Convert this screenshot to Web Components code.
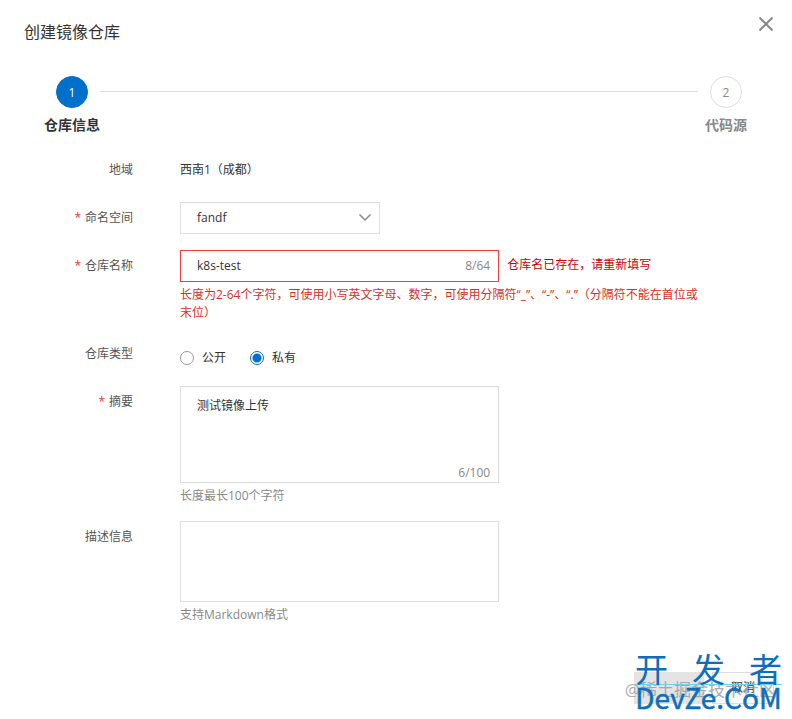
<!DOCTYPE html>
<html lang="zh-CN">
<head>
<meta charset="utf-8">
<title>创建镜像仓库</title>
<style>
  body {
    margin: 0;
    background: #fff;
    color: #333;
    font: 12px/18px "Open Sans", "Noto Sans CJK SC", sans-serif;
    text-spacing-trim: space-all;
  }
</style>
</head>
<body>
<repo-dialog heading="创建镜像仓库">
  <step-bar slot="steps">
    <step-item number="1" active>仓库信息</step-item>
    <step-item number="2">代码源</step-item>
  </step-bar>
  <static-field label="地域" value="西南1（成都）"></static-field>
  <select-field label="命名空间" value="fandf" required></select-field>
  <text-field label="仓库名称" value="k8s-test" max="64" error="仓库名已存在，请重新填写" required>长度为2-64个字符，可使用小写英文字母、数字，可使用分隔符“_”、“-”、“.”（分隔符不能在首位或末位）</text-field>
  <radio-field label="仓库类型" options="公开,私有" value="私有"></radio-field>
  <area-field label="摘要" value="测试镜像上传" max="100" rows="5" required>长度最长100个字符</area-field>
  <area-field label="描述信息" rows="4">支持Markdown格式</area-field>
  <button-bar slot="footer"></button-bar>
</repo-dialog>
<site-mark></site-mark>

<script>
class RepoDialog extends HTMLElement {
  constructor() {
    super();
    this.attachShadow({ mode: 'open' });
  }

  connectedCallback() {
    this.shadowRoot.innerHTML = `
      <style>
        :host { display: block; }
        header {
          display: flex;
          justify-content: space-between;
          align-items: flex-start;
          padding: 16px 18px 0 24px;
          height: 60px;
          box-sizing: border-box;
        }
        h1 { margin: 4px 0 0; font-size: 16px; line-height: 24px; font-weight: 400; }
        button { border: 0; padding: 0; background: none; height: 16px; cursor: pointer; }
        svg { display: block; }
        form {
          display: flex;
          flex-direction: column;
          gap: 16px;
          padding: 20px 80px 0 24px;
        }
      </style>
      <header>
        <h1>${this.getAttribute('heading')}</h1>
        <button type="button" aria-label="关闭">
          <svg width="16" height="16" viewBox="0 0 16 16" fill="none" stroke="#888" stroke-width="2">
            <path d="M1.5 1.5l13 13M14.5 1.5l-13 13"/>
          </svg>
        </button>
      </header>
      <slot name="steps"></slot>
      <form><slot></slot></form>
      <slot name="footer"></slot>
    `;
  }
}

class StepBar extends HTMLElement {
  constructor() {
    super();
    this.attachShadow({ mode: 'open' });
    this.shadowRoot.innerHTML = `
      <style>
        :host {
          display: flex;
          justify-content: space-between;
          padding: 16px 38px 0 44px;
          background: linear-gradient(#dedede, #dedede) no-repeat 100px 31px / calc(100% - 194px) 1px;
        }
      </style>
      <slot></slot>
    `;
  }
}

class StepItem extends HTMLElement {
  constructor() {
    super();
    this.attachShadow({ mode: 'open' });
  }

  connectedCallback() {
    this.shadowRoot.innerHTML = `
      <style>
        :host {
          display: flex;
          flex-direction: column;
          align-items: center;
          gap: 8px;
          width: 56px;
          color: #888;
          font-size: 14px;
          font-weight: 700;
          white-space: nowrap;
        }
        :host([active]) { color: #333; }
        .dot {
          width: 32px;
          height: 32px;
          box-sizing: border-box;
          border: 1px solid #dedede;
          border-radius: 50%;
          font-size: 12px;
          line-height: 32px;
          font-weight: 400;
          text-align: center;
        }
        :host([active]) .dot { background: #0070cc; border-color: #0070cc; color: #fff; }
      </style>
      <span class="dot">${this.getAttribute('number')}</span>
      <span><slot></slot></span>
    `;
  }
}

// Label column, control column and help line shared by all fields
class BaseField extends HTMLElement {
  constructor() {
    super();
    this.attachShadow({ mode: 'open' });
  }

  connectedCallback() {
    const help = this.textContent.trim() ? '<div class="help"><slot></slot></div>' : '';
    this.shadowRoot.innerHTML = `
      <style>
        :host { display: grid; grid-template-columns: 109px 1fr; column-gap: 47px; }
        .label { color: #555; line-height: 32px; text-align: right; white-space: nowrap; }
        :host([required]) .label::before { content: "*"; color: #e8353e; margin-right: 4px; }
        input, textarea, select { font: inherit; color: inherit; outline: 0; }
        .line { display: flex; align-items: flex-start; gap: 8px; }
        .box {
          display: flex;
          width: 60%;
          box-sizing: border-box;
          border: 1px solid #dedede;
          background: #fff;
        }
        .box input, .box textarea {
          flex: 1;
          min-width: 0;
          border: 0;
          margin: 0;
          background: none;
          resize: none;
        }
        .count { color: #888; padding-right: 8px; text-align: right; }
        .help { margin-top: 4px; padding-right: 8px; color: #888; }
        :host([error]) .box { border-color: #f0403c; }
        :host([error]) .help { color: #d93026; }
      </style>
      ${this.labelMarkup()}
      <div>${this.control()}${help}</div>
    `;
  }

  labelMarkup() {
    return `<label class="label" for="control">${this.getAttribute('label')}</label>`;
  }

  counter() {
    const max = this.getAttribute('max');
    return max ? `<span class="count">${this.getAttribute('value').length}/${max}</span>` : '';
  }
}

class StaticField extends BaseField {
  labelMarkup() {
    return `<span class="label">${this.getAttribute('label')}</span>`;
  }

  control() {
    return `<style>.value { line-height: 32px; }</style>
      <div class="value">${this.getAttribute('value')}</div>`;
  }
}

class SelectField extends BaseField {
  control() {
    return `
      <style>
        .pick { display: grid; width: 200px; align-items: center; }
        select {
          grid-area: 1 / 1;
          height: 32px;
          border: 1px solid #dedede;
          border-radius: 0;
          padding: 0 32px 0 16px;
          background: #fff;
          appearance: none;
        }
        svg { grid-area: 1 / 1; justify-self: end; margin-right: 8px; pointer-events: none; }
      </style>
      <div class="pick">
        <select id="control"><option>${this.getAttribute('value')}</option></select>
        <svg width="14" height="10" viewBox="0 0 14 10" fill="none" stroke="#888" stroke-width="1.500">
          <path d="M1.5 1.5L7 7l5.500-5.500"/>
        </svg>
      </div>`;
  }
}

class TextField extends BaseField {
  control() {
    return `
      <style>
        .box { height: 32px; align-items: center; }
        input { padding: 0 16px; }
        .error { color: #c00; line-height: 30px; white-space: nowrap; }
      </style>
      <div class="line">
        <div class="box">
          <input id="control" type="text" value="${this.getAttribute('value')}">
          ${this.counter()}
        </div>
        <span class="error">${this.getAttribute('error')}</span>
      </div>`;
  }
}

class AreaField extends BaseField {
  control() {
    const rows = this.getAttribute('rows');
    const height = rows * 16 + 17;
    return `
      <style>
        .box { flex-direction: column; height: ${height}px; }
        textarea { padding: 10px 16px 0; }
      </style>
      <div class="box">
        <textarea id="control">${this.getAttribute('value') || ''}</textarea>
        ${this.counter()}
      </div>`;
  }
}

class RadioField extends BaseField {
  labelMarkup() {
    return `<span class="label" id="caption">${this.getAttribute('label')}</span>`;
  }

  control() {
    const options = this.getAttribute('options').split(',').map(option => `
      <label>
        <input type="radio" name="type" ${option === this.getAttribute('value') ? 'checked' : ''}>${option}
      </label>`).join('');
    return `
      <style>
        .group { display: flex; gap: 24px; height: 32px; padding-top: 4px; box-sizing: border-box; }
        .group label { display: flex; align-items: center; gap: 8px; height: 32px; }
        input {
          appearance: none;
          width: 14px;
          height: 14px;
          margin: 0;
          box-sizing: border-box;
          border: 1px solid #999;
          border-radius: 50%;
        }
        input:checked { border-color: #0070cc; background: radial-gradient(#0070cc 4px, #fff 5px); }
      </style>
      <div class="group" role="radiogroup" aria-labelledby="caption">${options}</div>`;
  }
}

class ButtonBar extends HTMLElement {
  constructor() {
    super();
    this.attachShadow({ mode: 'open' });
    this.shadowRoot.innerHTML = `
      <style>
        :host { display: flex; justify-content: flex-end; gap: 8px; padding: 48px 18px 15px 0; }
        button {
          height: 32px;
          min-width: 62px;
          border: 1px solid #dedede;
          background: #fafafa;
          color: #333;
          font: inherit;
        }
        .next { min-width: 70px; background: #e4e4e4; border-color: #e4e4e4; }
      </style>
      <button class="next" type="button" aria-label="下一步" disabled></button>
      <button type="button">取消</button>
    `;
  }
}

// Stamps that lie over the footer buttons
class SiteMark extends HTMLElement {
  constructor() {
    super();
    this.attachShadow({ mode: 'open' });
    this.shadowRoot.innerHTML = `
      <style>
        :host {
          position: absolute;
          right: 10px;
          top: 650px;
          width: 147px;
          pointer-events: none;
        }
        .credit {
          position: absolute;
          right: 6px;
          top: 28px;
          color: #999;
          opacity: 0.8;
          font-size: 17px;
          line-height: 24px;
          white-space: nowrap;
        }
        .brand { position: relative; color: #0d6ebd; font-family: "Noto Sans CJK SC", sans-serif; }
        .cn {
          display: flex;
          justify-content: space-between;
          height: 34px;
          font-size: 33px;
          line-height: 36px;
          border-bottom: 1px solid #6fd0f5;
        }
        .en { font-size: 28px; line-height: 24px; text-align: center; white-space: nowrap; -webkit-text-stroke: 0.5px; }
      </style>
      <div class="credit">@稀土掘金技术社区</div>
      <div class="brand">
        <div class="cn"><span>开</span><span>发</span><span>者</span></div>
        <div class="en">DevZe.CoM</div>
      </div>
    `;
  }
}

customElements.define('repo-dialog', RepoDialog);
customElements.define('step-bar', StepBar);
customElements.define('step-item', StepItem);
customElements.define('static-field', StaticField);
customElements.define('select-field', SelectField);
customElements.define('text-field', TextField);
customElements.define('area-field', AreaField);
customElements.define('radio-field', RadioField);
customElements.define('button-bar', ButtonBar);
customElements.define('site-mark', SiteMark);
</script>
</body>
</html>
